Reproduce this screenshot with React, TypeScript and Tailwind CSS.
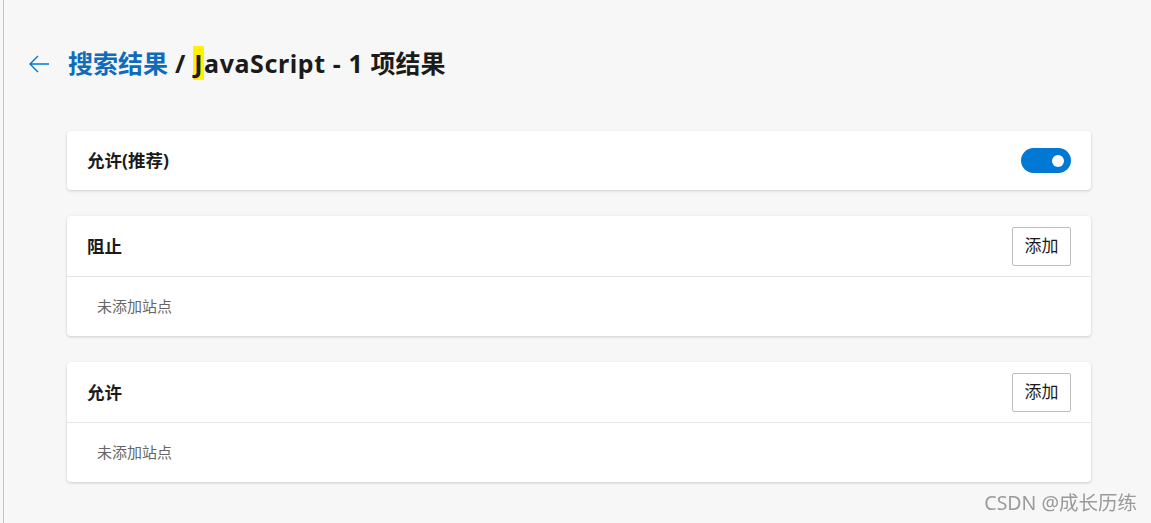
const font = "font-['Noto_Sans','Noto_Sans_CJK_SC',sans-serif]";

function Card({ title, right, body }: { title: string; right: React.ReactNode; body?: string }) {
  return (
    <section className="rounded-[4px] bg-white shadow-[0_1px_3px_rgba(0,0,0,0.18)]">
      <div className={`flex items-center justify-between pl-5 pr-5 ${body ? "h-[60px]" : "h-[59px]"}`}>
        <h2 className="text-[17.5px] font-bold text-[#1b1b1b]">{title}</h2>
        {right}
      </div>
      {body && (
        <div className="flex h-[60px] items-center border-t border-[#e5e5e5] pl-[30px] text-[15px] text-[#666]">
          {body}
        </div>
      )}
    </section>
  );
}

function AddButton() {
  return (
    <button className="h-[39px] w-[59px] rounded-[2px] border border-[#bdbdbd] bg-white text-[17px] text-[#1b1b1b]">
      添加
    </button>
  );
}

function Toggle() {
  return (
    <div className="flex h-[25px] w-[50px] items-center justify-end rounded-full bg-[#0078d4] pr-[7px]">
      <span className="h-[12px] w-[12px] rounded-full bg-white" />
    </div>
  );
}

export default function App() {
  return (
    <div className={`${font} flex h-[523px] w-[1151px] bg-[#f7f7f7]`}>
      <div className="ml-[3px] w-px bg-[#c4c4c4]" />
      <main className="flex-1">
        <header className="flex h-[131px] items-center pb-[3px] pl-6">
          <svg width="22" height="20" viewBox="0 0 22 20" className="mr-[18px]" fill="none" stroke="#0078d4" strokeWidth="1.4">
            <path d="M21 10H2M10 2 2 10l8 8" />
          </svg>
          <h1 className="text-[25px] font-bold text-[#1b1b1b]">
            <span className="text-[#0f6cbd]">搜索结果</span>
            <span className="tracking-[0.6px]">
              {" / "}
              <span className="bg-[#fff100] px-px">J</span>avaScript - 1{" "}
            </span>
            项结果
          </h1>
        </header>
        <div className="box-content flex w-[1024px] flex-col gap-[26px] pl-[63px]">
          <Card title="允许(推荐)" right={<Toggle />} />
          <Card title="阻止" right={<AddButton />} body="未添加站点" />
          <Card title="允许" right={<AddButton />} body="未添加站点" />
        </div>
      </main>
      <div className="pointer-events-none fixed bottom-[6px] right-[14px] text-[19.5px] text-[#9a9a9a]">CSDN @成长历练</div>
    </div>
  );
}
